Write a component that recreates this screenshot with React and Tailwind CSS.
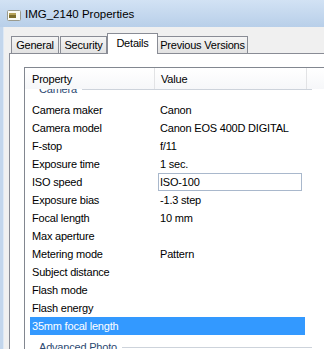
import React from 'react';

const rows = [
    { label: 'Camera maker', value: 'Canon' },
    { label: 'Camera model', value: 'Canon EOS 400D DIGITAL' },
    { label: 'F-stop', value: 'f/11' },
    { label: 'Exposure time', value: '1 sec.' },
    { label: 'ISO speed', value: 'ISO-100', editing: true },
    { label: 'Exposure bias', value: '-1.3 step' },
    { label: 'Focal length', value: '10 mm' },
    { label: 'Max aperture', value: '' },
    { label: 'Metering mode', value: 'Pattern' },
    { label: 'Subject distance', value: '' },
    { label: 'Flash mode', value: '' },
    { label: 'Flash energy', value: '' },
    { label: '35mm focal length', value: '', selected: true },
];

const tabs = [
    { label: 'General', cls: 'w-[48px]' },
    { label: 'Security', cls: 'ml-[1px] w-[47px]' },
    { label: 'Details', cls: 'w-[51px]', active: true },
    { label: 'Previous Versions', cls: '-ml-px w-[91px]' },
];

const PictureIcon = () => (
    <svg width="14" height="11" viewBox="0 0 14 11">
        <rect x="0.5" y="0.5" width="13" height="10" rx="1" fill="#fbfbf6" stroke="#9a9a8c" />
        <rect x="2" y="3" width="7" height="5" fill="#7d6e2e" />
        <rect x="2" y="3" width="7" height="2" fill="#b6a25a" />
    </svg>
);

const GroupHeader = ({ label, className = '' }) => (
    <div className={`mt-[3px] h-[19px] ml-[5px] pl-[9px] w-[282px] flex items-center gap-[5px] shrink-0 ${className}`}>
        <span className="text-[#2d4a72] whitespace-nowrap">{label}</span>
        <div className="flex-1 h-px bg-[#cdd3db]" />
    </div>
);

const App = () => {
    return (
        <div className="w-[324px] h-[349px] overflow-hidden bg-[#f0f0f0] flex flex-col text-[11px] tracking-[-0.2px] text-black font-['Liberation_Sans',Arial,sans-serif]">
            {/* Title bar */}
            <div className="h-[27px] shrink-0 bg-linear-to-b from-[#d2e2f4] to-[#b8cfe9] flex items-center pl-[7px] pt-[3px] gap-[4px]">
                <PictureIcon />
                <span className="text-[11.5px] tracking-normal">IMG_2140 Properties</span>
            </div>

            <div className="flex-1 flex min-h-0">
                {/* Window frame */}
                <div className="w-[4px] bg-[#c3d6ec] border-r border-[#dde8f5]" />

                <div className="flex-1 flex flex-col pl-[5px] pt-[6px] min-w-0">
                    {/* Tabs */}
                    <div className="h-[20px] shrink-0 flex items-end pl-[2px]">
                        {tabs.map((tab) =>
                            tab.active ? (
                                <div
                                    key={tab.label}
                                    className={`${tab.cls} h-[21px] -mb-px relative z-10 bg-white border border-b-0 border-[#898c95] flex items-center justify-center pb-[2px] whitespace-nowrap`}
                                >
                                    {tab.label}
                                </div>
                            ) : (
                                <div
                                    key={tab.label}
                                    className={`${tab.cls} h-[17px] bg-linear-to-b from-[#f5f5f5] to-[#e2e2e2] border border-b-0 border-[#898c95] flex items-center justify-center whitespace-nowrap`}
                                >
                                    {tab.label}
                                </div>
                            )
                        )}
                    </div>

                    {/* Tab panel */}
                    <div className="flex-1 min-h-0 bg-white border-l border-t border-[#898c95] pl-[14px] pt-[13px]">
                        <div className="h-full border-l border-t border-[#828790] flex flex-col">
                            {/* Column header */}
                            <div className="h-[21px] shrink-0 flex bg-linear-to-b from-white to-[#f6f7f9]">
                                <div className="w-[130px] border-r border-[#e2e3e5] pl-[7px] pt-[2px] flex items-center">Property</div>
                                <div className="w-[152px] border-r border-[#e2e3e5] pl-[6px] pt-[2px] flex items-center">Value</div>
                                <div className="flex-1" />
                            </div>

                            {/* Scrolled list body */}
                            <div className="flex-1 overflow-hidden">
                                <div className="-mt-[12px] flex flex-col">
                                    <GroupHeader label="Camera" className="mb-[2px]" />
                                    {rows.map((row) => (
                                        <div
                                            key={row.label}
                                            className={`h-[18px] shrink-0 ml-[5px] w-[275px] flex items-center ${row.selected ? 'bg-[#3399ff] text-white' : ''}`}
                                        >
                                            <div className="w-[130px] pl-[2px] whitespace-nowrap">{row.label}</div>
                                            <div className="flex-1 whitespace-nowrap">
                                                {row.editing ? (
                                                    <div className="-ml-[2px] w-[144px] h-[18px] border border-[#a9b8cc] pl-[1px] flex items-center">
                                                        {row.value}
                                                    </div>
                                                ) : (
                                                    row.value
                                                )}
                                            </div>
                                        </div>
                                    ))}
                                    <GroupHeader label="Advanced Photo" />
                                </div>
                            </div>
                        </div>
                    </div>
                </div>
            </div>
        </div>
    );
};

export default App;
